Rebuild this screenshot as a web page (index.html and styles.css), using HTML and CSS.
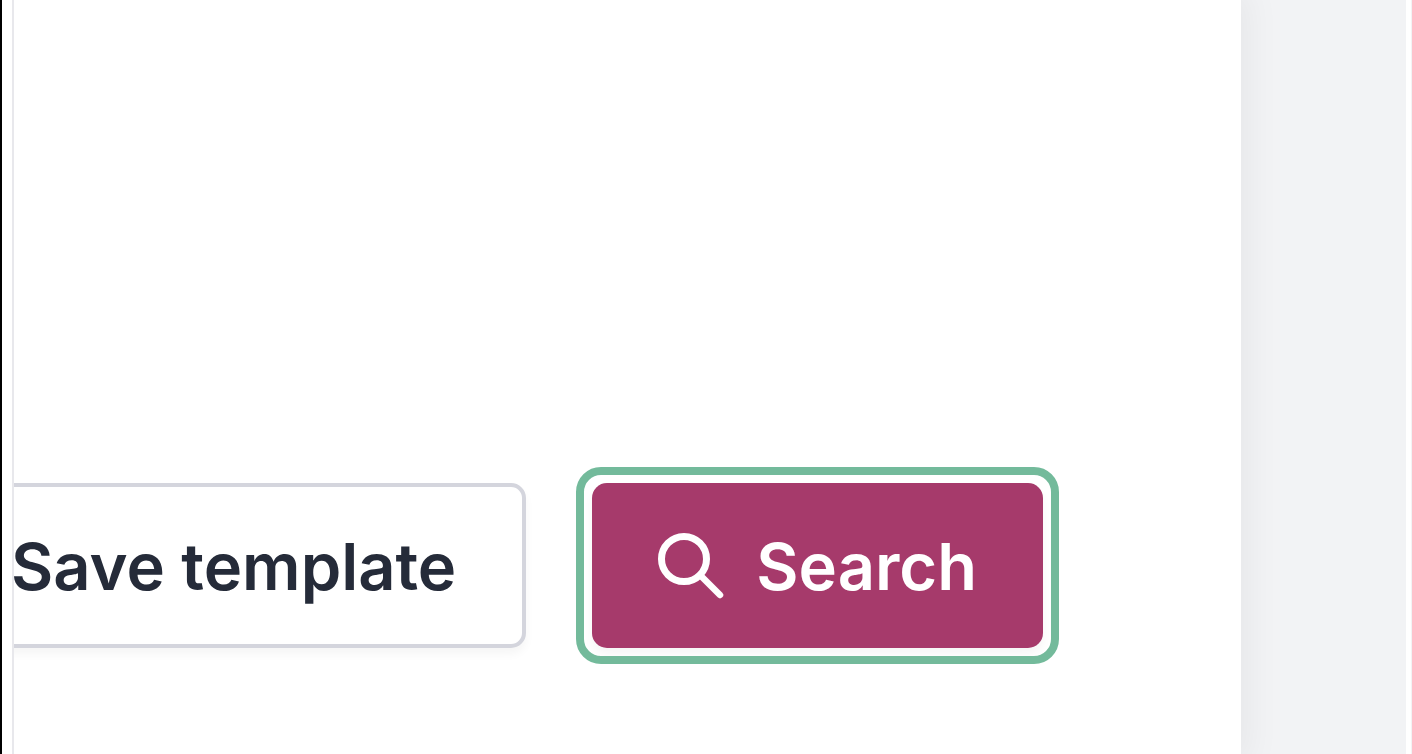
FILE: index.html
```
<!DOCTYPE html>
<html lang="en">
<head>
    <meta charset="UTF-8">
    <meta name="viewport" content="width=device-width, initial-scale=1.0">
    <title>Search</title>
    <link rel="stylesheet" href="styles.css">
</head>
<body>
    <div class="page">
        <main class="panel">
            <div class="actions">
                <button type="button" class="btn btn-secondary">Save template</button>
                <button type="submit" class="btn btn-primary">
                    <svg class="icon" viewBox="0 0 66 66" fill="none" stroke="currentColor" stroke-width="7" aria-hidden="true">
                        <circle cx="26" cy="25" r="22.5"/>
                        <path d="M42 41 L62 61" stroke-linecap="round" stroke-width="6.5"/>
                    </svg>
                    Search
                </button>
            </div>
        </main>
    </div>
</body>
</html>
```

FILE: styles.css
```
* {
    box-sizing: border-box;
}
body {
    margin: 0;
    border-right: 1px solid #f2f3f5;
    font-family: Inter, "Liberation Sans", sans-serif;
    background-color: #fff;
}
.page {
    display: flex;
    min-height: 100vh;
    margin-right: 5px;
    padding-left: 10px;
    border-left: 2px solid #000;
    background: linear-gradient(#fff, #fff) left / 14px 100% no-repeat #f2f3f5;
}
.panel {
    display: flex;
    flex: 1;
    flex-direction: column;
    justify-content: flex-end;
    min-width: 0;
    margin-right: 165px;
    border-left: 2px solid #e8e8ec;
    background-color: #fff;
    box-shadow: 0 0 32px 8px rgba(0, 0, 0, 0.05);
    clip-path: inset(0 -60px 0 0);
}
.actions {
    display: flex;
    justify-content: flex-end;
    gap: 66px;
    padding: 24px 198px 106px 0;
    overflow: hidden;
}
.btn {
    display: flex;
    flex-shrink: 0;
    align-items: center;
    gap: 32px;
    height: 165px;
    padding: 2px 66px 0;
    border: 0;
    border-radius: 15px;
    font-family: inherit;
    font-size: 65px;
    font-weight: 600;
    line-height: 80px;
    white-space: nowrap;
    cursor: pointer;
}
.btn-secondary {
    border: 4px solid #d4d5dd;
    background-color: #fff;
    color: #252b39;
    box-shadow: 0 6px 10px rgba(0, 0, 0, 0.04);
}
.btn-primary {
    position: relative;
    background-color: #a63a6b;
    color: #fff;
    box-shadow: 0 6px 10px rgba(0, 0, 0, 0.04);
}
/* focus ring */
.btn-primary::before {
    content: "";
    position: absolute;
    inset: -16px;
    border: 8px solid #73ba9b;
    border-radius: 25px;
}
.icon {
    width: 66px;
    height: 66px;
    overflow: visible;
}
```
